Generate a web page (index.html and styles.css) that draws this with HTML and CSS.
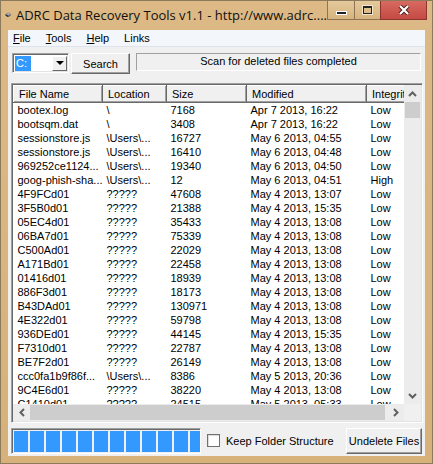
FILE: index.html
```html
<!DOCTYPE html>
<html lang="en">
<head>
    <meta charset="UTF-8">
    <title>ADRC Data Recovery Tools v1.1</title>
    <link rel="stylesheet" href="styles.css">
</head>
<body>
    <div class="window">
        <!-- Title bar -->
        <div class="titlebar">
            <svg class="app-icon" width="17" height="16" viewBox="0 0 17 16">
                <path d="M2 6 L9 2 L16 6 L16 10 L9 14 L2 10 Z" fill="#5a5a5a"/>
                <path d="M2 6 L9 2 L16 6 L9 10 Z" fill="#d8d8d8" stroke="#333" stroke-width="0.8"/>
                <path d="M2 6 L9 10 L9 14 L2 10 Z" fill="#2a2a2a"/>
                <ellipse cx="9" cy="6" rx="3" ry="1.8" fill="#7b7fd0"/>
                <circle cx="9" cy="6" r="0.8" fill="#fff"/>
                <path d="M11 12 L15 10" stroke="#9a9a9a" stroke-width="1"/>
            </svg>
            <span class="title">ADRC Data Recovery Tools v1.1 - http://www.adrc....</span>
            <div class="caption-btns">
                <div class="cap-btn min"><span class="min-icon"></span></div>
                <div class="cap-btn max"><span class="max-icon"></span></div>
                <div class="cap-btn close">
                    <svg width="12" height="10" viewBox="0 0 12 10">
                        <path d="M2 1 L10 9 M10 1 L2 9" stroke="#4a1a17" stroke-width="4"/>
                        <path d="M2 1 L10 9 M10 1 L2 9" stroke="#fff" stroke-width="2.2"/>
                    </svg>
                </div>
            </div>
        </div>

        <div class="client">
            <!-- Menu -->
            <div class="menubar">
                <span><u>F</u>ile</span>
                <span><u>T</u>ools</span>
                <span><u>H</u>elp</span>
                <span>Links</span>
            </div>

            <!-- Toolbar -->
            <div class="toolbar">
                <div class="combo">
                    <span class="combo-value">C:</span>
                    <span class="combo-btn"><span class="tri"></span></span>
                </div>
                <button class="btn search-btn">Search</button>
                <div class="status">Scan for deleted files completed</div>
            </div>

            <!-- File list -->
            <div class="listview">
                <div class="list-area">
                    <table class="files">
                        <colgroup>
                            <col style="width:89px">
                            <col style="width:64px">
                            <col style="width:80px">
                            <col style="width:120px">
                            <col style="width:80px">
                        </colgroup>
                        <thead>
                            <tr><th>File Name</th><th>Location</th><th>Size</th><th>Modified</th><th>Integrity</th></tr>
                        </thead>
                        <tbody>
                            <tr><td>bootex.log</td><td>\</td><td>7168</td><td>Apr 7 2013, 16:22</td><td>Low</td></tr>
                            <tr><td>bootsqm.dat</td><td>\</td><td>3408</td><td>Apr 7 2013, 16:22</td><td>Low</td></tr>
                            <tr><td>sessionstore.js</td><td>\Users\...</td><td>16727</td><td>May 6 2013, 04:55</td><td>Low</td></tr>
                            <tr><td>sessionstore.js</td><td>\Users\...</td><td>16410</td><td>May 6 2013, 04:48</td><td>Low</td></tr>
                            <tr><td>969252ce1124...</td><td>\Users\...</td><td>19340</td><td>May 6 2013, 04:50</td><td>Low</td></tr>
                            <tr><td>goog-phish-sha...</td><td>\Users\...</td><td>12</td><td>May 6 2013, 04:51</td><td>High</td></tr>
                            <tr><td>4F9FCd01</td><td>?????</td><td>47608</td><td>May 4 2013, 13:07</td><td>Low</td></tr>
                            <tr><td>3F5B0d01</td><td>?????</td><td>21388</td><td>May 4 2013, 15:35</td><td>Low</td></tr>
                            <tr><td>05EC4d01</td><td>?????</td><td>35433</td><td>May 4 2013, 13:08</td><td>Low</td></tr>
                            <tr><td>06BA7d01</td><td>?????</td><td>75339</td><td>May 4 2013, 13:08</td><td>Low</td></tr>
                            <tr><td>C500Ad01</td><td>?????</td><td>22029</td><td>May 4 2013, 13:08</td><td>Low</td></tr>
                            <tr><td>A171Bd01</td><td>?????</td><td>22458</td><td>May 4 2013, 13:08</td><td>Low</td></tr>
                            <tr><td>01416d01</td><td>?????</td><td>18939</td><td>May 4 2013, 13:08</td><td>Low</td></tr>
                            <tr><td>886F3d01</td><td>?????</td><td>18173</td><td>May 4 2013, 13:08</td><td>Low</td></tr>
                            <tr><td>B43DAd01</td><td>?????</td><td>130971</td><td>May 4 2013, 13:08</td><td>Low</td></tr>
                            <tr><td>4E322d01</td><td>?????</td><td>59798</td><td>May 4 2013, 13:08</td><td>Low</td></tr>
                            <tr><td>936DEd01</td><td>?????</td><td>44145</td><td>May 4 2013, 15:35</td><td>Low</td></tr>
                            <tr><td>F7310d01</td><td>?????</td><td>22787</td><td>May 4 2013, 13:08</td><td>Low</td></tr>
                            <tr><td>BE7F2d01</td><td>?????</td><td>26149</td><td>May 4 2013, 13:08</td><td>Low</td></tr>
                            <tr><td>ccc0fa1b9f86f...</td><td>\Users\...</td><td>8386</td><td>May 5 2013, 20:36</td><td>Low</td></tr>
                            <tr><td>9C4E6d01</td><td>?????</td><td>38220</td><td>May 4 2013, 13:08</td><td>Low</td></tr>
                            <tr><td>C1410d01</td><td>?????</td><td>24515</td><td>May 5 2013, 05:33</td><td>Low</td></tr>
                        </tbody>
                    </table>
                </div>
                <div class="vscroll">
                    <div class="arrow"><svg width="9" height="6" viewBox="0 0 9 6"><path d="M1 5 L4.5 1.5 L8 5" fill="none" stroke="#606060" stroke-width="2"/></svg></div>
                    <div class="vthumb"></div>
                    <div class="track"></div>
                    <div class="arrow"><svg width="9" height="6" viewBox="0 0 9 6"><path d="M1 1 L4.5 4.5 L8 1" fill="none" stroke="#606060" stroke-width="2"/></svg></div>
                </div>
                <div class="hscroll">
                    <div class="arrow"><svg width="6" height="9" viewBox="0 0 6 9"><path d="M5 1 L1.5 4.5 L5 8" fill="none" stroke="#606060" stroke-width="2"/></svg></div>
                    <div class="hthumb"></div>
                    <div class="arrow"><svg width="6" height="9" viewBox="0 0 6 9"><path d="M1 1 L4.5 4.5 L1 8" fill="none" stroke="#606060" stroke-width="2"/></svg></div>
                </div>
                <div class="corner"></div>
            </div>

            <!-- Bottom bar -->
            <div class="bottombar">
                <div class="progress">
                    <span></span><span></span><span></span><span></span>
                    <span></span><span></span><span></span><span></span>
                    <span></span><span></span><span></span><span></span>
                </div>
                <label class="check"><span class="box"></span>Keep Folder Structure</label>
                <button class="btn undelete-btn">Undelete Files</button>
            </div>
        </div>
    </div>
</body>
</html>
```

FILE: styles.css
```css
body {
    margin: 0;
    background: #fff;
    font-family: 'Liberation Sans', Arial, sans-serif;
    font-size: 11px;
    color: #000;
}

.window {
    width: 433px;
    height: 464px;
    box-sizing: border-box;
    border: 1px solid #8c7a5c;
    background: linear-gradient(#dcb985, #d6b17a);
    display: flex;
    flex-direction: column;
}

/* Title bar */
.titlebar {
    height: 29px;
    display: flex;
    align-items: flex-start;
    flex-shrink: 0;
}

.app-icon {
    margin: 6px 0 0 4px;
}

.title {
    margin: 5px 0 0 5px;
    font-family: 'Open Sans', sans-serif;
    font-size: 13px;
    color: #111;
    white-space: nowrap;
}

.caption-btns {
    margin-left: auto;
    margin-right: 5px;
    display: flex;
}

.cap-btn {
    height: 19px;
    box-sizing: border-box;
    border: 1px solid #8f7352;
    border-top: none;
    display: flex;
    align-items: center;
    justify-content: center;
}

.cap-btn.min,
.cap-btn.max {
    width: 27px;
    background: linear-gradient(#e4c99c, #d7b47e);
    border-right: none;
}

.cap-btn.max {
    width: 26px;
}

.cap-btn.close {
    width: 47px;
    background: linear-gradient(#d86a62, #c44a42);
    border-color: #8a3530;
}

.min-icon {
    width: 9px;
    height: 2px;
    margin-top: 5px;
    background: #222;
    border: 1px solid #fff;
}

.max-icon {
    width: 7px;
    height: 5px;
    border: 1px solid #222;
    border-top-width: 2px;
    outline: 1px solid #f4e6cc;
}

/* Client area */
.client {
    flex: 1;
    margin: 0 7px 7px 7px;
    background: #f0f0f0;
    display: flex;
    flex-direction: column;
    min-height: 0;
}

.menubar {
    height: 16px;
    display: flex;
    align-items: center;
    gap: 15px;
    padding-left: 5px;
    background: #f3f6fb;
    border-bottom: 1px solid #dde3ec;
    flex-shrink: 0;
}

.toolbar {
    height: 36px;
    box-sizing: border-box;
    padding: 6px 4px 0 4px;
    display: flex;
    align-items: flex-start;
    flex-shrink: 0;
}

.combo {
    width: 57px;
    height: 20px;
    box-sizing: border-box;
    border: 1px solid;
    border-color: #a0a0a0 #fff #fff #a0a0a0;
    box-shadow: inset 1px 1px 0 #696969, inset -1px -1px 0 #e3e3e3;
    background: #fff;
    display: flex;
    align-items: center;
    padding: 0 1px 0 2px;
}

.combo-value {
    background: #3399ff;
    color: #fff;
    padding: 1px 4px 2px 1px;
    margin-right: auto;
}

.combo-btn {
    width: 15px;
    height: 15px;
    box-sizing: border-box;
    background: #f0f0f0;
    border: 1px solid;
    border-color: #fff #696969 #696969 #fff;
    display: flex;
    align-items: center;
    justify-content: center;
}

.tri {
    width: 0;
    height: 0;
    border-left: 4px solid transparent;
    border-right: 4px solid transparent;
    border-top: 4px solid #000;
}

.btn {
    font-family: inherit;
    font-size: 11px;
    color: #000;
    background: #f0f0f0;
    border: 1px solid;
    border-color: #fff #696969 #696969 #fff;
    box-shadow: inset -1px -1px 0 #a0a0a0;
    padding: 0;
}

.search-btn {
    width: 59px;
    height: 21px;
    margin-left: 2px;
}

.status {
    flex: 1;
    height: 18px;
    margin-left: 6px;
    box-sizing: border-box;
    border: 1px solid;
    border-color: #a0a0a0 #fff #fff #a0a0a0;
    text-align: center;
    line-height: 15px;
}

/* List view */
.listview {
    height: 340px;
    margin: 0 2px 0 3px;
    box-sizing: border-box;
    border: 1px solid;
    border-color: #a0a0a0 #fff #fff #a0a0a0;
    box-shadow: inset 1px 1px 0 #696969, inset -1px -1px 0 #e3e3e3;
    padding: 1px 1px 1px 1px;
    display: grid;
    grid-template-columns: 1fr 17px;
    grid-template-rows: 1fr 17px;
    flex-shrink: 0;
}

.list-area {
    overflow: hidden;
    background: #fff;
}

.files {
    border-collapse: collapse;
    table-layout: fixed;
    width: 433px;
}

.files th {
    height: 17px;
    box-sizing: border-box;
    padding: 0 0 0 5px;
    text-align: left;
    font-weight: normal;
    background: #f0f0f0;
    border: 1px solid;
    border-color: #fff #696969 #696969 #fff;
    box-shadow: inset -1px -1px 0 #a0a0a0;
    white-space: nowrap;
    overflow: hidden;
}

.files td {
    height: 14px;
    padding: 0 0 0 4px;
    line-height: 14px;
    white-space: nowrap;
    overflow: hidden;
}

.vscroll {
    display: flex;
    flex-direction: column;
    background: #ececec;
}

.vscroll .arrow {
    height: 17px;
    display: flex;
    align-items: center;
    justify-content: center;
}

.vthumb {
    height: 16px;
    background: #cdcdcd;
    margin: 0 1px;
}

.vscroll .track {
    flex: 1;
}

.hscroll {
    display: flex;
    background: #ececec;
}

.hscroll .arrow {
    width: 17px;
    display: flex;
    align-items: center;
    justify-content: center;
}

.hthumb {
    flex: 1;
    margin: 1px 2px 1px 0;
    background: #cdcdcd;
}

.corner {
    background: #f0f0f0;
}

/* Bottom bar */
.bottombar {
    flex: 1;
    display: flex;
    align-items: flex-start;
    padding: 5px 3px 0 3px;
}

.progress {
    width: 190px;
    height: 26px;
    box-sizing: border-box;
    border: 1px solid;
    border-color: #a0a0a0 #fff #fff #a0a0a0;
    box-shadow: inset 1px 1px 0 #696969;
    padding: 2px 0 0 2px;
    display: flex;
    gap: 2px;
    overflow: hidden;
}

.progress span {
    flex: 0 0 14px;
    height: 21px;
    background: #3399ff;
}

.check {
    display: flex;
    align-items: center;
    gap: 6px;
    margin: 6px 0 0 6px;
}

.box {
    width: 13px;
    height: 13px;
    box-sizing: border-box;
    border: 1px solid #707070;
    background: #fff;
    box-shadow: inset 1px 1px 0 #dcdcdc;
}

.undelete-btn {
    width: 76px;
    height: 26px;
    margin-left: auto;
}
```
